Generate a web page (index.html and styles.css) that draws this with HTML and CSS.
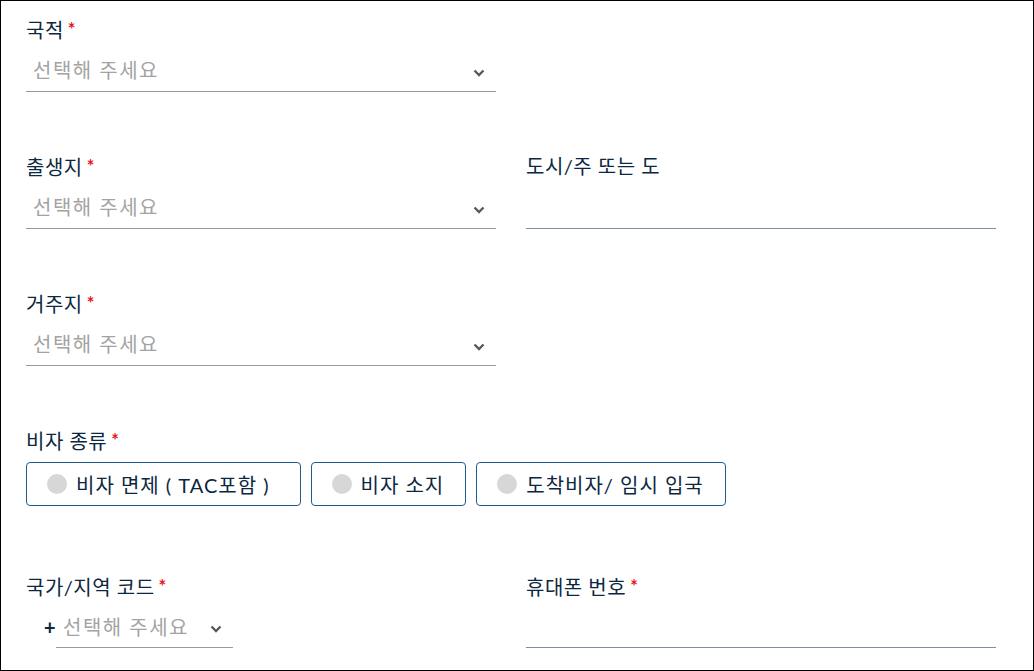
FILE: index.html
```html
<!DOCTYPE html>
<html lang="ko">
<head>
<meta charset="utf-8">
<link rel="stylesheet" href="styles.css">
</head>
<body>
<form class="form">
  <div class="row">
    <div class="field">
      <label class="label">국적<span class="req">*</span></label>
      <div class="select"><span class="ph">선택해 주세요</span><svg class="chev" viewBox="0 0 12 8" width="12" height="8"><path d="M1.5 1.5 L6 6 L10.5 1.5" fill="none" stroke="#5a5a5a" stroke-width="2.4"/></svg></div>
    </div>
  </div>
  <div class="row">
    <div class="field">
      <label class="label">출생지<span class="req">*</span></label>
      <div class="select"><span class="ph">선택해 주세요</span><svg class="chev" viewBox="0 0 12 8" width="12" height="8"><path d="M1.5 1.5 L6 6 L10.5 1.5" fill="none" stroke="#5a5a5a" stroke-width="2.4"/></svg></div>
    </div>
    <div class="field">
      <label class="label">도시/주 또는 도</label>
      <div class="input"></div>
    </div>
  </div>
  <div class="row">
    <div class="field">
      <label class="label">거주지<span class="req">*</span></label>
      <div class="select"><span class="ph">선택해 주세요</span><svg class="chev" viewBox="0 0 12 8" width="12" height="8"><path d="M1.5 1.5 L6 6 L10.5 1.5" fill="none" stroke="#5a5a5a" stroke-width="2.4"/></svg></div>
    </div>
  </div>
  <div class="row visa-row">
    <div class="field wide">
      <label class="label">비자 종류<span class="req">*</span></label>
      <div class="options">
        <button type="button" class="opt opt-wide"><span class="dot"></span>비자 면제 ( TAC포함 )</button>
        <button type="button" class="opt"><span class="dot"></span>비자 소지</button>
        <button type="button" class="opt"><span class="dot"></span>도착비자/ 임시 입국</button>
      </div>
    </div>
  </div>
  <div class="row">
    <div class="field">
      <label class="label">국가/지역 코드<span class="req">*</span></label>
      <div class="code">
        <span class="plus">+</span>
        <div class="select small"><span class="ph">선택해 주세요</span><svg class="chev" viewBox="0 0 12 8" width="12" height="8"><path d="M1.5 1.5 L6 6 L10.5 1.5" fill="none" stroke="#5a5a5a" stroke-width="2.4"/></svg></div>
      </div>
    </div>
    <div class="field">
      <label class="label">휴대폰 번호<span class="req">*</span></label>
      <div class="input phone"></div>
    </div>
  </div>
</form>
</body>
</html>
```

FILE: styles.css
```css
html, body {
  margin: 0;
  padding: 0;
}
body {
  box-sizing: border-box;
  width: 1034px;
  height: 671px;
  border: 1px solid #000;
  background: #fff;
  font-family: "Lato", "Noto Sans CJK KR", sans-serif;
  font-size: 20px;
  letter-spacing: 1px;
  color: #0c2740;
  overflow: hidden;
}
.form {
  padding: 15px 0 0 25px;
  display: flex;
  flex-direction: column;
  gap: 61px;
}
.row {
  display: grid;
  grid-template-columns: 470px 470px;
  column-gap: 30px;
}
.field {
  display: flex;
  flex-direction: column;
}
.wide {
  grid-column: 1 / span 2;
}
.label {
  line-height: 26px;
  height: 26px;
  letter-spacing: 0.5px;
}
.req {
  color: #e8141c;
  margin-left: 4px;
  font-size: 18px;
  font-weight: 700;
  letter-spacing: 0;
  vertical-align: 2px;
}
.select {
  display: flex;
  align-items: center;
  justify-content: space-between;
  height: 50px;
  box-sizing: border-box;
  padding: 6px 11px 0 7px;
  border-bottom: 1px solid #9a9a9a;
}
.ph {
  color: #a3a3a3;
  letter-spacing: 1.5px;
}
.chev {
  margin-top: 6px;
}
.input {
  height: 50px;
  box-sizing: border-box;
  border-bottom: 1px solid #7f8fa0;
}
.input.phone {
  height: 49px;
}
.visa-row {
  margin-bottom: 6px;
}
.options {
  display: flex;
  gap: 10px;
  margin-top: 9px;
}
.opt {
  display: flex;
  align-items: center;
  gap: 9px;
  height: 44px;
  padding: 0 21px 0 20px;
  border: 1px solid #1d5a8e;
  border-radius: 4px;
  background: #fff;
  font: inherit;
  letter-spacing: 1px;
  color: #0c2740;
}
.opt-wide {
  padding-right: 30px;
}
.dot {
  flex: none;
  width: 20px;
  height: 20px;
  border-radius: 50%;
  background: #d7d7d7;
}
.code {
  display: flex;
  align-items: flex-end;
}
.plus {
  width: 30px;
  padding-left: 18px;
  box-sizing: border-box;
  line-height: 28px;
  margin-bottom: 7px;
  font-weight: 700;
}
.select.small {
  width: 177px;
  height: 49px;
  padding: 6px 11px 0 7px;
}
```
